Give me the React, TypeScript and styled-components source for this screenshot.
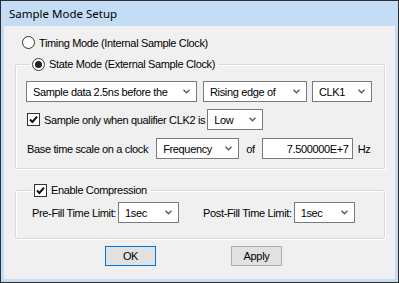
import React from 'react';
import styled, { createGlobalStyle } from 'styled-components';

const GlobalStyle = createGlobalStyle`
  html, body {
    margin: 0;
    padding: 0;
    background: #f0f0f0;
  }
  body {
    font-family: "Liberation Sans", Arial, sans-serif;
    font-size: 11px;
    color: #000;
  }
`;

const Window = styled.div`
  width: 399px;
  height: 283px;
  box-sizing: border-box;
  border: 1px solid #2e2e2e;
  background: #c5ddf4;
  display: flex;
  flex-direction: column;
`;

const TitleBar = styled.div`
  height: 25px;
  display: flex;
  align-items: center;
  padding-left: 8px;
  font-family: "Noto Sans", "Open Sans", sans-serif;
  font-size: 11.5px;
  color: #000;
`;

const Body = styled.div`
  flex: 1;
  margin: 0 3px 3px 3px;
  background: #f0f0f0;
  padding: 10px 10px 0 11px;
  display: flex;
  flex-direction: column;
  letter-spacing: -0.35px;
`;

const Option = styled.label<{ $indent?: number }>`
  display: flex;
  align-items: center;
  height: 13px;
  margin-left: ${(p) => p.$indent ?? 0}px;
  white-space: nowrap;
`;

const RadioCircle = styled.span<{ $on?: boolean }>`
  width: 13px;
  height: 13px;
  box-sizing: border-box;
  border: 1px solid #333;
  border-radius: 50%;
  background: #fff;
  display: flex;
  align-items: center;
  justify-content: center;
  margin-right: 4px;
  flex-shrink: 0;

  &::after {
    content: '';
    display: ${(p) => (p.$on ? 'block' : 'none')};
    width: 7px;
    height: 7px;
    border-radius: 50%;
    background: #222;
  }
`;

const CheckBox = styled.span`
  width: 13px;
  height: 13px;
  box-sizing: border-box;
  border: 1px solid #333;
  background: #fff;
  display: flex;
  align-items: center;
  justify-content: center;
  margin-right: 4px;
  flex-shrink: 0;
`;

const Group = styled.fieldset<{ $top: number; $pt: number; $pb: number }>`
  margin: ${(p) => p.$top}px 0 0 0;
  padding: ${(p) => p.$pt}px 10px ${(p) => p.$pb}px 10px;
  border: 1px solid #d9d9d9;
  border-radius: 2px;
  box-shadow: 1px 1px 0 #fff, inset 1px 1px 0 #fff;
  min-width: 0;
`;

const Legend = styled.legend<{ $ml: number }>`
  padding: 0 3px 0 2px;
  margin-left: ${(p) => p.$ml}px;
  height: 14px;
  display: flex;
  align-items: center;
`;

const Row = styled.div<{ $mt?: number; $pl?: number }>`
  display: flex;
  align-items: center;
  margin-top: ${(p) => p.$mt ?? 0}px;
  padding-left: ${(p) => p.$pl ?? 0}px;
  white-space: nowrap;
`;

const Select = styled.div<{ $w: number; $ml?: number }>`
  width: ${(p) => p.$w}px;
  height: 21px;
  box-sizing: border-box;
  border: 1px solid #7a7a7a;
  background: #fff;
  display: flex;
  align-items: center;
  padding: 0 6px 0 6px;
  margin-left: ${(p) => p.$ml ?? 0}px;
  flex-shrink: 0;

  span {
    flex: 1;
    overflow: hidden;
  }
`;

const Label = styled.span<{ $ml?: number }>`
  margin-left: ${(p) => p.$ml ?? 0}px;
`;

const Field = styled.div<{ $w: number; $ml?: number }>`
  width: ${(p) => p.$w}px;
  height: 21px;
  box-sizing: border-box;
  border: 1px solid #7a7a7a;
  background: #fff;
  display: flex;
  align-items: center;
  justify-content: flex-end;
  padding-right: 3px;
  margin-left: ${(p) => p.$ml ?? 0}px;
`;

const Buttons = styled.div`
  display: flex;
  margin-top: 7px;
  padding-left: 90px;
  gap: 75px;
`;

const Button = styled.div<{ $default?: boolean }>`
  width: 51px;
  height: 20px;
  box-sizing: border-box;
  border: 1px solid ${(p) => (p.$default ? '#0078d7' : '#adadad')};
  background: #e1e1e1;
  display: flex;
  align-items: center;
  justify-content: center;
`;

const Chevron = () => (
  <svg width="7" height="5" viewBox="0 0 7 5">
    <path d="M0.5 0.8 L3.5 3.8 L6.5 0.8" fill="none" stroke="#5a5a5a" strokeWidth="1.4" />
  </svg>
);

const Check = () => (
  <svg width="9" height="9" viewBox="0 0 9 9">
    <path d="M1 4.5 L3.4 7 L8 1.6" fill="none" stroke="#111" strokeWidth="2" />
  </svg>
);

const Drop = ({ w, ml, value }: { w: number; ml?: number; value: string }) => (
  <Select $w={w} $ml={ml}>
    <span>{value}</span>
    <Chevron />
  </Select>
);

export default function App() {
  return (
    <>
      <GlobalStyle />
      <Window>
        <TitleBar>Sample Mode Setup</TitleBar>
        <Body>
          <Option $indent={7}>
            <RadioCircle />
            Timing Mode (Internal Sample Clock)
          </Option>

          <Group $top={8} $pt={10} $pb={9}>
            <Legend $ml={4}>
              <RadioCircle $on />
              State Mode (External Sample Clock)
            </Legend>
            <Row>
              <Drop w={171} value="Sample data 2.5ns before the" />
              <Drop w={104} ml={6} value="Rising edge of" />
              <Drop w={60} ml={5} value="CLK1" />
            </Row>
            <Row $mt={7}>
              <CheckBox style={{ marginLeft: 1 }}>
                <Check />
              </CheckBox>
              <Label>Sample only when qualifier CLK2 is</Label>
              <Drop w={56} ml={2} value="Low" />
            </Row>
            <Row $mt={8} $pl={1}>
              <Label>Base time scale on a clock</Label>
              <Drop w={83} ml={8} value="Frequency" />
              <Label $ml={7}>of</Label>
              <Field $w={91} $ml={7}>7.500000E+7</Field>
              <Label $ml={5}>Hz</Label>
            </Row>
          </Group>

          <Group $top={14} $pt={5} $pb={15}>
            <Legend $ml={6}>
              <CheckBox>
                <Check />
              </CheckBox>
              Enable Compression
            </Legend>
            <Row $pl={6}>
              <Label>Pre-Fill Time Limit:</Label>
              <Drop w={61} ml={2} value="1sec" />
              <Label $ml={24}>Post-Fill Time Limit:</Label>
              <Drop w={61} ml={2} value="1sec" />
            </Row>
          </Group>

          <Buttons>
            <Button $default>OK</Button>
            <Button>Apply</Button>
          </Buttons>
        </Body>
      </Window>
    </>
  );
}
